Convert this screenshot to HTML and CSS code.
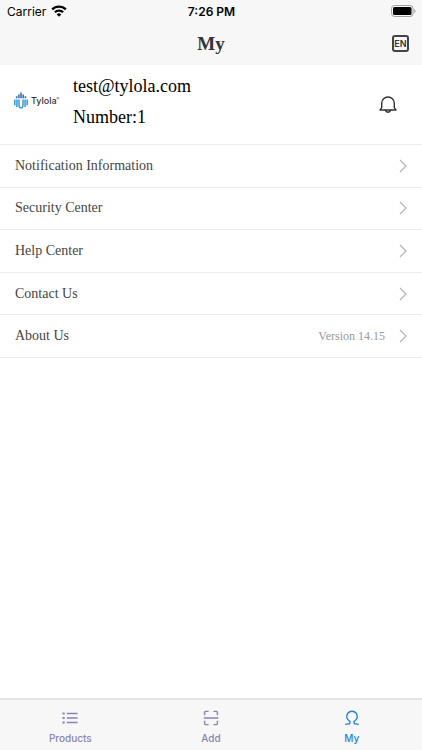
FILE: index.html
```html
<!DOCTYPE html>
<html lang="en">
<head>
<meta charset="utf-8">
<meta name="viewport" content="width=device-width, initial-scale=1">
<title>My</title>
<link rel="stylesheet" href="styles.css">
</head>
<body>
<div class="app">
  <div class="status">
    <div class="status-left">
      <span>Carrier</span>
      <svg class="wifi" viewBox="0 0 16 12" width="16" height="12" fill="none" stroke="#000" stroke-width="2.3">
        <path d="M1.2 4.4a9.6 9.6 0 0 1 13.6 0"/>
        <path d="M3.9 7.3a5.8 5.8 0 0 1 8.2 0"/>
        <path d="M8 11.8L5.7 9.4a3.3 3.3 0 0 1 4.6 0z" fill="#000" stroke="none"/>
      </svg>
    </div>
    <span class="time">7:26 PM</span>
    <div class="status-right">
      <svg viewBox="0 0 25 12" width="25" height="12">
        <rect x=".5" y=".5" width="21.5" height="11" rx="3" fill="none" stroke="#a0a0a0"/>
        <rect x="2" y="2" width="18.5" height="8" rx="1.5"/>
        <path d="M23.2 4v4q1.3-.6 1.3-2t-1.3-2z" fill="#a0a0a0"/>
      </svg>
    </div>
  </div>
  <header class="header">
    <h1>My</h1>
    <button class="lang" aria-label="Language: English">EN</button>
  </header>
  <main class="main">
    <section class="profile">
      <div class="logo">
        <svg viewBox="0 0 14 17" width="14" height="17" fill="none" stroke-width="1.6">
          <g stroke="#3b6fae">
            <path d="M2.7 6.2V4.2M4.9 6.2V2.4M7 6.2V.4M9.2 6.2V2.4M11.4 6.2V4.2"/>
          </g>
          <g stroke="#3f9fdc">
            <path d="M.8 7.6v5.6M2.9 7.6v7.4M5 7.6v5.8q0 2 2 2.6M13.2 7.6v5.6M11.1 7.6v7.4M9 7.6v5.8q0 2-2 2.6"/>
          </g>
        </svg>
        <span class="logo-name">Tylola<sup>®</sup></span>
      </div>
      <div class="account">
        <p>test@tylola.com</p>
        <p>Number:1</p>
      </div>
      <button class="bell" aria-label="Notifications">
        <svg viewBox="0 0 18 18" width="18" height="18" fill="none" stroke="#333" stroke-width="1.4" stroke-linejoin="round" stroke-linecap="round">
          <path d="M2.7 11.6V7.2a6.3 6.2 0 0 1 12.6 0v4.4l1.7 2.4H1z"/>
          <path d="M6.4 14.3a2.7 2.7 0 0 0 5.2 0"/>
        </svg>
      </button>
    </section>
    <nav class="menu">
      <a href="#notifications"><span>Notification Information</span><svg class="chev" viewBox="0 0 8 14"><path d="M1 1l6 6-6 6"/></svg></a>
      <a href="#security"><span>Security Center</span><svg class="chev" viewBox="0 0 8 14"><path d="M1 1l6 6-6 6"/></svg></a>
      <a href="#help"><span>Help Center</span><svg class="chev" viewBox="0 0 8 14"><path d="M1 1l6 6-6 6"/></svg></a>
      <a href="#contact"><span>Contact Us</span><svg class="chev" viewBox="0 0 8 14"><path d="M1 1l6 6-6 6"/></svg></a>
      <a href="#about"><span>About Us</span><span class="version">Version 14.15</span><svg class="chev" viewBox="0 0 8 14"><path d="M1 1l6 6-6 6"/></svg></a>
    </nav>
  </main>
  <nav class="tabs">
    <a href="#products">
      <svg viewBox="0 0 16 16" width="16" height="16" stroke="currentColor" fill="none">
        <path d="M.5 3.5h2.2M.5 8h2.2M.5 12.5h2.2" stroke-width="2.1"/>
        <path d="M4.8 3.5h10.8M4.8 8h10.8M4.8 12.5h10.8" stroke-width="1.4"/>
      </svg>
      <span>Products</span>
    </a>
    <a href="#add">
      <svg viewBox="0 0 16 16" width="16" height="16" stroke="currentColor" fill="none" stroke-width="1.4">
        <path d="M1.6 5.2V2.4q0-1 1-1h3M10.4 1.4h3q1 0 1 1v2.8M14.4 10.8v2.8q0 1-1 1h-3M5.6 14.6h-3q-1 0-1-1v-2.8M.7 8h14.6"/>
      </svg>
      <span>Add</span>
    </a>
    <a href="#my" class="active" aria-current="page">
      <svg viewBox="0 0 16 16" width="16" height="16" stroke="currentColor" fill="none" stroke-width="1.4" stroke-linejoin="round">
        <path d="M1.4 14.7Q2.2 13.9 3.4 13.9H5.6L6 11.4A5.3 5.3 0 1 1 10 11.4L10.4 13.9H12.6Q13.8 13.9 14.6 14.7"/>
      </svg>
      <span>My</span>
    </a>
  </nav>
</div>
</body>
</html>
```
FILE: styles.css
```css
* {
  box-sizing: border-box;
}

body {
  margin: 0;
  background: #fff;
  font-family: "Liberation Serif", serif;
}

h1,
p {
  margin: 0;
}

button {
  border: 0;
  padding: 0;
  background: none;
}

a {
  color: inherit;
  text-decoration: none;
}

svg {
  display: block;
  flex: none;
}

.app {
  display: flex;
  flex-direction: column;
  min-height: 100vh;
}

.status {
  display: grid;
  grid-template-columns: 1fr auto 1fr;
  align-items: center;
  height: 22px;
  padding: 0 6px 0 7px;
  background: #f7f7f7;
  font-family: Inter, sans-serif;
  font-size: 12px;
}

.status-left {
  display: flex;
  align-items: center;
  gap: 5px;
}

.time {
  font-weight: 600;
}

.status-right {
  display: flex;
  justify-content: flex-end;
}

.header {
  display: grid;
  grid-template-columns: 1fr auto 1fr;
  align-items: center;
  height: 43px;
  padding: 0 13px;
  background: #f7f7f7;
}

.header h1 {
  grid-column: 2;
  color: #333;
  font-size: 19px;
  line-height: 22px;
}

.lang {
  justify-self: end;
  width: 17px;
  height: 17px;
  border: 2px solid #444;
  border-radius: 3px;
  color: #333;
  font: 600 9px/13px Inter, sans-serif;
}

.main {
  flex: 1;
}

.profile {
  display: flex;
  align-items: center;
  height: 80px;
  padding: 0 25px 0 14px;
  border-bottom: 1px solid #ececec;
}

.logo {
  display: flex;
  align-items: center;
  gap: 3px;
  width: 59px;
  margin-bottom: 8px;
}

.logo-name {
  color: #333;
  font: 500 9px/10px Inter, sans-serif;
}

.logo-name sup {
  font-size: 4px;
  line-height: 0;
}

.account {
  flex: 1;
  font-size: 18px;
  line-height: 31px;
  margin-bottom: 6px;
}

.menu {
  display: grid;
  grid-template-rows: repeat(5, 1fr);
  height: 213px;
}

.menu a {
  display: flex;
  align-items: center;
  padding: 0 15px;
  border-bottom: 1px solid #ececec;
  color: #444;
  font-size: 14px;
  line-height: 16px;
}

.menu a > span:first-child {
  flex: 1;
}

.menu .version {
  margin-right: 14px;
  color: #999;
  font-size: 12px;
}

.chev {
  width: 8px;
  height: 14px;
  fill: none;
  stroke: #b4b4b4;
  stroke-width: 1.2;
}

.tabs {
  display: grid;
  grid-template-columns: repeat(3, 1fr);
  height: 52px;
  border-top: 2px solid #e4e4e4;
  background: #f7f7f7;
  color: #8785b2;
  font: 500 10px/14px Inter, sans-serif;
}

.tabs a {
  display: flex;
  flex-direction: column;
  align-items: center;
  gap: 5px;
  padding-top: 10px;
}

.tabs .active {
  color: #2583e0;
}
```
